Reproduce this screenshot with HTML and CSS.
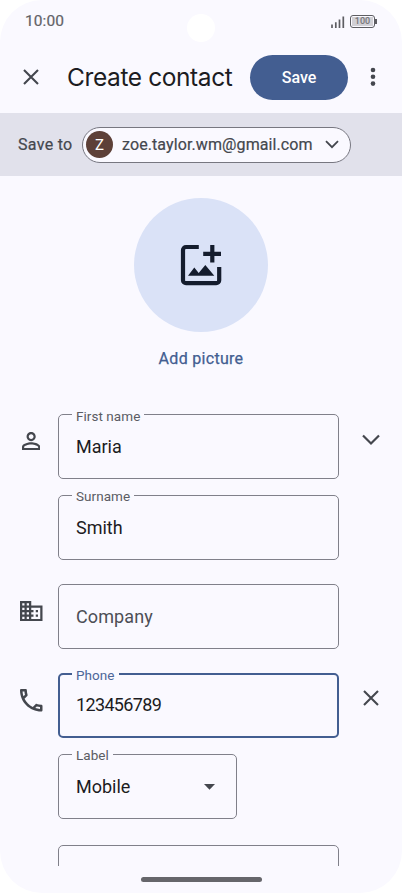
FILE: index.html
```html
<!DOCTYPE html>
<html lang="en">
<head>
<meta charset="utf-8">
<title>Create contact</title>
<link rel="stylesheet" href="styles.css">
</head>
<body>
<div class="phone">
  <header class="status">
    <span class="clock">10:00</span>
    <i class="camera"></i>
    <svg class="signal" width="14" height="14" viewBox="0 0 14 14"><path d="M1 13V9.500M4.800 13V7.200M8.500 13V4.500M12.300 13V1.500" stroke="#5d5d62" stroke-width="1.700"/></svg>
    <span class="battery"><span class="charge">100</span></span>
  </header>
  <div class="toolbar">
    <svg width="18" height="18" viewBox="0 0 18 18"><path d="M2 2L16 16M16 2L2 16" stroke="#43464e" stroke-width="2.100"/></svg>
    <h1>Create contact</h1>
    <button class="save">Save</button>
    <svg class="more" width="6" height="20" viewBox="0 0 6 20" fill="#44474e"><circle cx="3" cy="3" r="2.300"/><circle cx="3" cy="9.800" r="2.300"/><circle cx="3" cy="16.600" r="2.300"/></svg>
  </div>
  <div class="account">
    <span class="save-to">Save to</span>
    <div class="chip">
      <span class="avatar">Z</span>
      <span class="email">zoe.taylor.wm@gmail.com</span>
      <svg width="14" height="9" viewBox="0 0 14 9"><path d="M1 1.200L7 7.200L13 1.200" fill="none" stroke="#44474e" stroke-width="1.800"/></svg>
    </div>
  </div>
  <main>
    <div class="picture">
      <div class="circle">
        <svg width="42" height="42" viewBox="0 0 42 42"><path d="M18.800 3H6A3 3 0 0 0 3 6V36.200a3 3 0 0 0 3 3H36.200a3 3 0 0 0 3-3V23" fill="none" stroke="#141c2d" stroke-width="4.200"/><path d="M32.300 1V18.500M23.200 9.800H41" stroke="#141c2d" stroke-width="4.200"/><path d="M8 31.800L14.300 23.500L18.700 29L25.300 21L34.300 31.800Z" fill="#141c2d"/></svg>
      </div>
      <span class="add">Add picture</span>
    </div>
    <div class="row name">
      <svg class="lead person" width="18.300" height="18.300" viewBox="4 4 16 16"><path fill="#44474e" d="M12 5.900c1.160 0 2.100.94 2.100 2.100s-.94 2.100-2.100 2.100S9.900 9.160 9.900 8s.94-2.100 2.100-2.100m0 9c2.970 0 6.100 1.460 6.100 2.100v1.100H5.900V17c0-.64 3.130-2.100 6.100-2.100M12 4C9.790 4 8 5.790 8 8s1.790 4 4 4 4-1.790 4-4-1.790-4-4-4zm0 9c-2.670 0-8 1.340-8 4v3h16v-3c0-2.660-5.330-4-8-4z"/></svg>
      <div class="field"><label>First name</label><span>Maria</span></div>
      <svg class="trail" width="20" height="12" viewBox="0 0 20 12"><path d="M2 1.500L10 9.500L18 1.500" fill="none" stroke="#44474e" stroke-width="2.200"/></svg>
    </div>
    <div class="row surname">
      <div class="field"><label>Surname</label><span>Smith</span></div>
    </div>
    <div class="row company">
      <svg class="lead building" width="22.500" height="20.250" viewBox="2 3 20 18"><path fill="#44474e" d="M12 7V3H2v18h20V7H12zM6 19H4v-2h2v2zm0-4H4v-2h2v2zm0-4H4V9h2v2zm0-4H4V5h2v2zm4 12H8v-2h2v2zm0-4H8v-2h2v2zm0-4H8V9h2v2zm0-4H8V5h2v2zm10 12h-8v-2h2v-2h-2v-2h2v-2h-2V9h8v10zm-2-8h-2v2h2v-2zm0 4h-2v2h2v-2z"/></svg>
      <div class="field"><span class="placeholder">Company</span></div>
    </div>
    <div class="row phone-row">
      <svg class="lead handset" width="22.500" height="22.500" viewBox="3 3 18 18"><path fill="#44474e" d="M6.540 5c.06.89.21 1.760.45 2.590l-1.200 1.200c-.41-1.200-.67-2.470-.76-3.790h1.510m9.860 12.020c.85.24 1.720.39 2.600.45v1.490c-1.320-.09-2.590-.35-3.800-.75l1.200-1.190M7.500 3H4c-.55 0-1 .45-1 1 0 9.390 7.610 17 17 17 .55 0 1-.45 1-1v-3.490c0-.55-.45-1-1-1-1.240 0-2.450-.2-3.570-.57-.1-.04-.21-.05-.31-.05-.26 0-.51.1-.71.29l-2.200 2.200c-2.830-1.450-5.150-3.760-6.590-6.590l2.200-2.200c.28-.28.36-.67.25-1.020C8.700 6.450 8.500 5.250 8.500 4c0-.55-.45-1-1-1z"/></svg>
      <div class="field focused"><label>Phone</label><span class="number">123456789</span></div>
      <svg class="trail" width="18" height="18" viewBox="0 0 18 18"><path d="M2 2L16 16M16 2L2 16" stroke="#44474e" stroke-width="2.100"/></svg>
    </div>
    <div class="row type">
      <div class="field"><label>Label</label><span>Mobile</span><svg class="caret" width="11" height="6" viewBox="0 0 11 6"><path d="M0 0H11L5.500 5.700Z" fill="#44474e"/></svg></div>
    </div>
    <div class="row next"><div class="field"></div></div>
  </main>
  <div class="home"></div>
</div>
</body>
</html>
```
FILE: styles.css
```css
* { box-sizing: border-box; }
body { margin: 0; background: #fff; font-family: Roboto, sans-serif; color: #1c1c22; }
svg { display: block; flex: none; }
span, label, h1 { white-space: nowrap; }
.phone { width: 402px; height: 893px; background: #faf9ff; border-radius: 42px; overflow: hidden; display: flex; flex-direction: column; }
.status { height: 42px; display: flex; align-items: center; padding: 0 25px; position: relative; flex: none; }
.clock { font-size: 15.500px; color: #626267; letter-spacing: .1px; flex: 1; -webkit-text-stroke: .2px #626267; }
.camera { position: absolute; left: 186.500px; top: 13.500px; width: 28px; height: 28px; border-radius: 50%; background: #fff; }
.signal { margin: 2px 5px 0 0; }
.battery { width: 25px; height: 13px; border: 1px solid #5d5d62; border-radius: 3px; padding: 1px; position: relative; margin-right: 2px; }
.battery::after { content: ""; position: absolute; right: -3px; top: 3px; width: 2px; height: 5px; background: #5d5d62; }
.charge { display: block; background: #d1d0d5; font: 500 9px/9px Roboto, sans-serif; text-align: center; color: #77777b; }
.toolbar { height: 70px; margin-bottom: 1px; display: flex; align-items: center; padding: 0 26px 0 22px; flex: none; }
h1 { font: 400 24.500px/32px Inter, sans-serif; letter-spacing: -.4px; margin: 0 0 0 27px; width: 183px; }
.save { width: 98px; height: 45px; border: 0; border-radius: 23px; background: #435e91; color: #fff; font: 500 16px Roboto, sans-serif; padding: 0; }
.more { margin-left: 22px; }
.account { height: 63px; background: #e1e1eb; display: flex; align-items: center; padding-left: 18px; flex: none; color: #44474e; font-size: 16px; letter-spacing: .1px; -webkit-text-stroke: .2px #44474e; }
.save-to { width: 63.500px; letter-spacing: .3px; }
.chip { height: 36px; width: 269.500px; border: 1px solid #777780; border-radius: 18px; background: #faf9ff; display: flex; align-items: center; padding-left: 3.500px; }
.avatar { width: 27px; height: 27px; border-radius: 50%; background: #5d4038; color: #fff; display: grid; place-items: center; font-size: 15px; letter-spacing: 0; -webkit-text-stroke: 0; }
.email { margin-left: 9px; width: 203px; }
main { height: 690px; overflow: hidden; flex: none; }
.picture { height: 238px; padding-top: 22px; display: flex; flex-direction: column; align-items: center; }
.circle { width: 134px; height: 134px; border-radius: 50%; background: #dae2f7; display: grid; place-items: center; }
.add { margin-top: 17px; font-size: 16px; line-height: 20px; letter-spacing: .3px; color: #435e91; -webkit-text-stroke: .25px #435e91; }
.row { display: grid; grid-template-columns: 58px 281px 63px; height: 65px; }
.field { grid-column: 2; grid-row: 1; position: relative; border: 1px solid #80808a; border-radius: 5px; display: flex; align-items: center; padding-left: 17px; font-size: 18px; height: 65px; }
.field label { position: absolute; left: 13px; top: -8px; padding: 0 4px; background: #faf9ff; color: #5b5c63; font-size: 13.500px; line-height: 18px; letter-spacing: .05px; }
.surname .field label, .type .field label { top: -9px; }
.field.focused { border: 2px solid #435e91; padding-left: 16px; }
.field.focused label { left: 12px; top: -9px; color: #4d6799; }
.placeholder { color: #4d4e55; letter-spacing: .1px; }
.number { letter-spacing: -.65px; margin-top: -2px; }
.lead { grid-column: 1; grid-row: 1; }
.person { margin: 18px 0 0 22px; }
.building { margin: 17px 0 0 20px; }
.handset { margin: 16px 0 0 20px; }
.trail { grid-column: 3; grid-row: 1; justify-self: center; margin-top: 16px; }
.name .trail { margin-top: 20px; }
.surname { margin-top: 16px; }
.company { margin-top: 24px; }
.phone-row { margin-top: 24px; }
.type { margin-top: 16px; grid-template-columns: 58px 179px; }
.next { margin-top: 26px; }
.caret { margin-left: auto; margin-right: 21px; }
.home { width: 121px; height: 5px; border-radius: 3px; background: #66666b; margin: 11px auto 0; }
```
